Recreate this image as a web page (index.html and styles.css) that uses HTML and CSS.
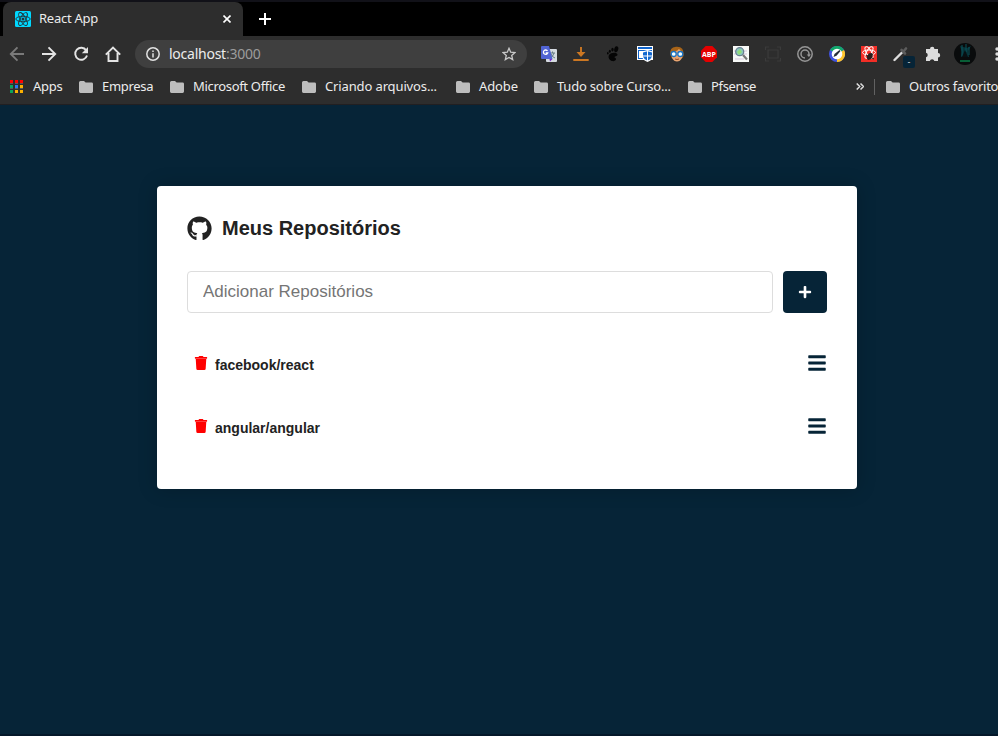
FILE: index.html
```
<!DOCTYPE html>
<html lang="pt-BR">
<head>
<meta charset="utf-8">
<title>React App</title>
<link rel="stylesheet" href="styles.css">
</head>
<body>
<svg class="defs" width="0" height="0">
  <symbol id="folder" viewBox="0 0 14 12"><path d="M1.500 0H5l1.600 1.500h6A1.400 1.400 0 0 1 14 3v7.600a1.400 1.400 0 0 1-1.400 1.400H1.400A1.400 1.400 0 0 1 0 10.600V1.500A1.500 1.500 0 0 1 1.500 0z"/></symbol>
  <symbol id="bars" viewBox="0 0 448 512"><path d="M16 132h416c8.837 0 16-7.163 16-16V76c0-8.837-7.163-16-16-16H16C7.163 60 0 67.163 0 76v40c0 8.837 7.163 16 16 16zm0 160h416c8.837 0 16-7.163 16-16v-40c0-8.837-7.163-16-16-16H16c-8.837 0-16 7.163-16 16v40c0 8.837 7.163 16 16 16zm0 160h416c8.837 0 16-7.163 16-16v-40c0-8.837-7.163-16-16-16H16c-8.837 0-16 7.163-16 16v40c0 8.837 7.163 16 16 16z"/></symbol>
  <symbol id="trash" viewBox="0 0 448 512"><path d="M432 32H312l-9.400-18.700A24 24 0 0 0 281.100 0H166.800a23.720 23.720 0 0 0-21.400 13.300L136 32H16A16 16 0 0 0 0 48v32a16 16 0 0 0 16 16h416a16 16 0 0 0 16-16V48a16 16 0 0 0-16-16zM32 112l21.200 355a48 48 0 0 0 47.900 45h245.800a48 48 0 0 0 47.900-45L416 112z"/></symbol>
</svg>
<header class="browser">
  <div class="tabstrip">
    <div class="tab">
      <svg class="favicon" viewBox="0 0 16 16"><rect width="16" height="16" rx="1.500" fill="#00d8ff"/><g fill="none" stroke="#20343c" stroke-width=".9"><ellipse cx="8" cy="8" rx="7.200" ry="2.700"/><ellipse cx="8" cy="8" rx="7.200" ry="2.700" transform="rotate(60 8 8)"/><ellipse cx="8" cy="8" rx="7.200" ry="2.700" transform="rotate(120 8 8)"/></g><circle cx="8" cy="8" r="1.500" fill="#20343c"/></svg>
      <span class="tab-title">React App</span>
      <svg class="close" viewBox="0 0 8 8"><path d="M.5.5l7 7M7.500.5l-7 7"/></svg>
    </div>
    <svg class="newtab" viewBox="0 0 12 12"><path d="M6 0v12M0 6h12"/></svg>
  </div>
  <div class="toolbar">
    <nav class="nav">
      <svg class="dim" viewBox="0 0 16 16"><path d="M15 8H2M8.500 1.300L1.800 8l6.700 6.700"/></svg>
      <svg viewBox="0 0 16 16"><path d="M1 8h13M7.500 1.300L14.200 8l-6.700 6.700"/></svg>
      <svg viewBox="0 0 16 16"><path d="M13.200 4.400A6 6 0 1 0 14 9.500"/><path class="solid" d="M15 1v6.200H8.800z"/></svg>
      <svg viewBox="0 0 16 16"><path d="M.8 8.700L8 1.500l7.200 7.200M3.500 7v8h9V7"/></svg>
    </nav>
    <div class="address">
      <svg class="info" viewBox="0 0 14 14"><circle cx="7" cy="7" r="6.200"/><path d="M7 6.200v4.300M7 3.400v1.500"/></svg>
      <span class="url">localhost<span class="port">:3000</span></span>
      <svg class="star" viewBox="0 0 14 14"><path d="M7 1.300l1.700 3.900 4.200.4-3.200 2.800 1 4.200L7 10.400l-3.700 2.200 1-4.200L1.100 5.600l4.200-.4z"/></svg>
    </div>
    <div class="extensions">
      <svg viewBox="0 0 16 16"><rect x="5" y="3" width="11" height="13" rx="1" fill="#d5dae0"/><path d="M9 7h5M11.500 5.500V7M13 7q-1 4-4 5M10 8q1 3 4 4" stroke="#637b83" fill="none"/><path d="M1 0h7l3.500 13H1q-1 0-1-1V1q0-1 1-1z" fill="#5164d4"/><path d="M8.500 13h3L9 15.500z" fill="#7523ce"/><path d="M6.500 5A2.200 2.200 0 1 0 6.700 7H4.700" fill="none" stroke="#fff" stroke-width="1.300"/></svg>
      <svg viewBox="0 0 16 16"><path d="M8 1v8M.3 14h15.400" fill="none" stroke="#cc7722" stroke-width="1.900"/><path d="M3.500 6h9L8 11z" fill="#cc7722"/></svg>
      <svg viewBox="0 0 16 16" fill="#050505"><ellipse cx="11.300" cy="3.200" rx="2" ry="3" transform="rotate(15 11 3)"/><ellipse cx="7.500" cy="3.600" rx="1.200" ry="1.900"/><ellipse cx="4.800" cy="5.200" rx="1" ry="1.500"/><ellipse cx="2.800" cy="7.200" rx=".8" ry="1.200"/><path d="M4 9c2-3 8-3 8.500-.5.3 1.600-2.500 1.500-3 2.500-.4 1 1.500.5 1.500 2 0 1.700-2.200 2.500-4 2-2.500-.7-4.300-3.500-3-6z"/></svg>
      <svg viewBox="0 0 16 16"><path d="M0 0h16v14H0z" fill="#fff"/><path d="M1 1h14v2H1zM1 4h14v9H1z" fill="#1064cc"/><path d="M2 5h5v7H2z" fill="#fff"/><path d="M10.500 4l5.500 1.500v5q-1 4-5.500 5.500Q6 14.500 5 10.500v-5z" fill="#fff"/><path d="M10.500 5.200L15 6.500v4q-1 3-4.500 4.300Q7 13.500 6 10.500v-4z" fill="#1167cf"/><path d="M10.500 5v10M6 10h9" stroke="#fff"/></svg>
      <svg viewBox="0 0 16 16"><path d="M1.500 9Q0 1 7 .7q8-.7 7.700 8.300l-1 3h-11z" fill="#a86418"/><path d="M3 5q5 1 7-2l3 3v6q-2 3.500-5 3.500T3 12z" fill="#eba671"/><g fill="#f4ffff" stroke="#1771c4" stroke-width="1.300"><circle cx="4.700" cy="8" r="2.500"/><circle cx="11.300" cy="8" r="2.500"/></g><path d="M6 13q2 1 4 0" stroke="#964622" fill="none"/></svg>
      <svg viewBox="0 0 16 16"><path d="M4.700 0h6.600L16 4.700v6.600L11.300 16H4.700L0 11.300V4.700z" fill="#e40000"/><text class="abp" x="8" y="10.600" text-anchor="middle">ABP</text></svg>
      <svg viewBox="0 0 16 16"><path d="M0 0h16v16H0z" fill="#f8faf8"/><path d="M1 5h13M1 8h13M2 13h9" stroke="#d7c5dd"/><circle cx="6.700" cy="5.700" r="4" fill="#8bc7bd" stroke="#697f91" stroke-width="1.300"/><path d="M4 6l3-3 2 3-3 3z" fill="#91dc79"/><path d="M10 9l4 4.500" stroke="#777" stroke-width="2.200"/></svg>
      <svg viewBox="0 0 16 16"><path d="M.5 4V1H4M12 1h3.500v3M15.500 12v3H12M4 15H.5v-3M3 4h10v8H3z" fill="none" stroke="#3b3b3b" stroke-width="1.200"/></svg>
      <svg viewBox="0 0 16 16" fill="none" stroke="#969696" stroke-width="1.500"><circle cx="8" cy="8" r="7.200"/><path d="M8 12A4 4 0 1 1 12 8v1"/><path d="M9.800 8.500H14l-2.100 2.600z" fill="#969696" stroke="none"/></svg>
      <svg viewBox="0 0 16 16"><circle cx="8" cy="8" r="8" fill="#4053de"/><path d="M1 4a8 8 0 0 1 14 0L8 8z" fill="#13a96b"/><path d="M15 4a8 8 0 0 1-7 12V8z" fill="#ffc52b"/><circle cx="8" cy="8" r="5.300" fill="#fff"/><path d="M4.500 11l1-3 5-4 1 1-4 4.800z" fill="#252d38"/></svg>
      <svg viewBox="0 0 16 16"><path d="M0 0h16v16H0z" fill="#f22e26"/><g fill="none" stroke="#fff"><ellipse cx="8" cy="6.500" rx="6.500" ry="2.500"/><ellipse cx="8" cy="6.500" rx="6.500" ry="2.500" transform="rotate(60 8 6.500)"/><ellipse cx="8" cy="6.500" rx="6.500" ry="2.500" transform="rotate(120 8 6.500)"/></g><ellipse cx="9" cy="10.500" rx="2.500" ry="3.500" fill="#271c1b" transform="rotate(30 9 10)"/><path d="M5 9l8 4M6 12l6-4M7 14l4-7" stroke="#271c1b"/></svg>
      <div class="picker"><svg viewBox="0 0 16 16"><path d="M1.500 14L9 6.500" stroke="#ddd" stroke-width="2.400" stroke-linecap="round"/><path d="M8.500 4l3.500 3.500M10.500 5.500L13 2.500" stroke="#5c5c5c" stroke-width="2.600" stroke-linecap="round"/></svg><span class="badge">-</span></div>
      <svg viewBox="0 0 16 16" fill="#ddd"><path d="M1 3h4a2.200 2.200 0 0 1 4.400 0H13v4a2.200 2.200 0 0 1 0 4.400V15H9.400a2.400 2.400 0 0 0-4.600 0H1v-3.700a2.400 2.400 0 0 0 0-4.600z"/></svg>
      <svg class="avatar" viewBox="0 0 22 22"><circle cx="11" cy="11" r="11" fill="#090b0c"/><path d="M6 3l2 6-1 5h8l-1-6 3-5-4 2z" fill="#07343a"/><path d="M8 2v11M12 1v8M15 4v8" stroke="#0b525b"/><path d="M11 7l3 7H8z" fill="#081013"/><path d="M6 18h10" stroke="#087b45" stroke-width="1.500"/></svg>
      <svg viewBox="0 0 16 16" fill="#ddd"><circle cx="8" cy="3" r="1.700"/><circle cx="8" cy="8" r="1.700"/><circle cx="8" cy="13" r="1.700"/></svg>
    </div>
  </div>
  <div class="bookmarks">
    <svg class="apps" viewBox="0 0 13 13"><path d="M0 0h3v3H0zM5 0h3v3H5zM10 0h3v3h-3z" fill="#f00"/><path d="M0 5h3v3H0zM0 10h3v3H0z" fill="#0aa55b"/><path d="M5 5h3v3H5z" fill="#2878f5"/><path d="M10 5h3v3h-3zM5 10h3v3H5zM10 10h3v3h-3z" fill="#fbb000"/><path d="M0 3.500h13M0 8.500h13" stroke="#777" stroke-width=".6" stroke-dasharray="3 2"/></svg>
    <span class="label apps-label">Apps</span>
    <svg class="folder"><use href="#folder"/></svg><span class="label empresa">Empresa</span>
    <svg class="folder"><use href="#folder"/></svg><span class="label office">Microsoft Office</span>
    <svg class="folder"><use href="#folder"/></svg><span class="label criando">Criando arquivos...</span>
    <svg class="folder"><use href="#folder"/></svg><span class="label adobe">Adobe</span>
    <svg class="folder"><use href="#folder"/></svg><span class="label curso">Tudo sobre Curso...</span>
    <svg class="folder"><use href="#folder"/></svg><span class="label pfsense">Pfsense</span>
    <svg class="more" viewBox="0 0 8 7"><path d="M.7.5l3 3-3 3M4.500.5l3 3-3 3"/></svg>
    <span class="divider"></span>
    <svg class="folder"><use href="#folder"/></svg><span class="label outros">Outros favorito</span>
  </div>
</header>
<main class="card">
  <h1><svg class="github" viewBox="0 0 496 512"><path d="M165.900 397.400c0 2-2.300 3.600-5.200 3.600-3.300.3-5.600-1.300-5.600-3.600 0-2 2.300-3.600 5.200-3.600 3-.3 5.600 1.300 5.600 3.600zm-31.100-4.500c-.7 2 1.300 4.300 4.300 4.900 2.600 1 5.600 0 6.200-2s-1.300-4.300-4.300-5.200c-2.600-.7-5.500.3-6.200 2.300zm44.200-1.700c-2.900.7-4.900 2.600-4.600 4.900.3 2 2.900 3.300 5.900 2.600 2.900-.7 4.900-2.600 4.600-4.600-.3-1.900-3-3.200-5.900-2.900zM244.800 8C106.100 8 0 113.300 0 252c0 110.900 69.800 205.800 169.500 239.200 12.800 2.300 17.300-5.600 17.300-12.100 0-6.200-.3-40.400-.3-61.400 0 0-70 15-84.700-29.800 0 0-11.400-29.100-27.800-36.600 0 0-22.900-15.700 1.600-15.400 0 0 24.900 2 38.600 25.800 21.900 38.600 58.600 27.500 72.900 20.900 2.300-16 8.800-27.100 16-33.700-55.900-6.200-112.300-14.300-112.300-110.500 0-27.500 7.600-41.300 23.600-58.900-2.600-6.500-11.100-33.300 2.600-67.900 20.900-6.500 69 27 69 27 20-5.600 41.500-8.500 62.800-8.500s42.800 2.900 62.800 8.500c0 0 48.100-33.600 69-27 13.700 34.700 5.200 61.400 2.600 67.900 16 17.700 25.800 31.500 25.800 58.900 0 96.500-58.900 104.200-114.800 110.500 9.200 7.900 17 22.900 17 46.400 0 33.700-.3 75.400-.3 83.600 0 6.500 4.600 14.400 17.300 12.100C428.200 457.800 496 362.900 496 252 496 113.300 383.500 8 244.800 8z"/></svg>Meus Repositórios</h1>
  <form class="form">
    <input type="text" placeholder="Adicionar Repositórios">
    <button type="button" aria-label="Adicionar"><svg viewBox="0 0 448 512"><path d="M416 208H272V64c0-17.670-14.330-32-32-32h-32c-17.670 0-32 14.330-32 32v144H32c-17.670 0-32 14.330-32 32v32c0 17.670 14.330 32 32 32h144v144c0 17.670 14.330 32 32 32h32c17.670 0 32-14.330 32-32V304h144c17.670 0 32-14.330 32-32v-32c0-17.670-14.330-32-32-32z"/></svg></button>
  </form>
  <ul class="repos">
    <li><span class="repo"><svg class="trash"><use href="#trash"/></svg><span>facebook/react</span></span><svg class="bars"><use href="#bars"/></svg></li>
    <li><span class="repo"><svg class="trash"><use href="#trash"/></svg><span>angular/angular</span></span><svg class="bars"><use href="#bars"/></svg></li>
  </ul>
</main>
</body>
</html>
```
FILE: styles.css
```
* { box-sizing: border-box; margin: 0; padding: 0; }
html, body { height: 100%; overflow: hidden; }
body { background: #062437; color: #222; font: 14px "Liberation Sans", Arial, sans-serif; border-bottom: 2px solid #04182a; }
svg { display: block; flex: none; }
.defs { position: absolute; }

.browser { height: 105px; background: #2d2d2d; border-bottom: 1px solid #211f21; color: #ececec; font-family: "Noto Sans", sans-serif; font-size: 13px; overflow: hidden; }
.tabstrip { height: 36px; display: flex; align-items: flex-end; background: #000; border-top: 2px solid #111118; padding-left: 3px; }
.tab { width: 240px; height: 34px; display: flex; align-items: center; padding: 0 12px; background: #2d2d2d; border-radius: 8px 8px 0 0; }
.favicon { width: 16px; height: 16px; margin-right: 8px; }
.tab-title { flex: 1; padding-bottom: 2px; white-space: nowrap; letter-spacing: -.25px; }
.close { width: 8px; height: 8px; fill: none; stroke: #fff; stroke-width: 1.6; }
.newtab { width: 12px; height: 12px; margin: 0 0 11px 16px; stroke: #fff; stroke-width: 2; }

.toolbar { height: 36px; display: flex; align-items: center; padding-left: 9px; }
.nav { display: flex; flex: none; gap: 16px; margin-right: 14px; }
.nav svg { width: 16px; height: 16px; fill: none; stroke: #e4e4e4; stroke-width: 1.9; }
.nav .dim { stroke: #7a7a7a; }
.nav .solid { fill: #e4e4e4; stroke: none; }
.address { flex: none; width: 392px; height: 28px; display: flex; align-items: center; padding: 0 11px; background: #3f3f3f; border-radius: 14px; font-size: 14px; }
.info { width: 14px; height: 14px; margin-right: 9px; fill: none; stroke: #e2e2e2; stroke-width: 1.5; }
.url { flex: 1; padding-bottom: 1px; letter-spacing: -.25px; }
.port { color: #9c9c9c; }
.star { width: 14px; height: 14px; fill: none; stroke: #c9c9c9; stroke-width: 1.3; }
.extensions { display: flex; flex: none; align-items: center; gap: 16px; margin-left: 14px; }
.extensions > svg { width: 16px; height: 16px; }
.extensions > .avatar { width: 22px; height: 22px; margin: 0 -3px; }
.abp { font: bold 7px "Open Sans", sans-serif; fill: #fff; }
.picker { position: relative; width: 16px; height: 16px; }
.badge { position: absolute; left: 10px; top: 10px; width: 12px; height: 12px; border-radius: 2px; background: #062437; color: #ddd; font-size: 9px; line-height: 11px; text-align: center; }

.bookmarks { height: 32px; display: flex; align-items: center; padding: 0 0 3px 10px; white-space: nowrap; }
.apps { width: 13px; height: 13px; margin-right: 10px; }
.folder { width: 14px; height: 12px; margin-right: 9px; fill: #bdbdbd; }
.label { flex: none; padding-bottom: 2px; }
.apps-label { width: 46px; letter-spacing: -.25px; }
.empresa { width: 68px; letter-spacing: -.3px; }
.office { width: 109px; letter-spacing: -.32px; }
.criando { width: 131px; letter-spacing: -.13px; }
.adobe { width: 55px; letter-spacing: -.1px; }
.curso { width: 131px; letter-spacing: -.22px; }
.pfsense { width: 145px; letter-spacing: -.35px; }
.outros { letter-spacing: -.25px; }
.more { width: 8px; height: 7px; fill: none; stroke: #ddd; stroke-width: 1.5; }
.divider { flex: none; width: 1px; height: 16px; margin: 0 11px 0 10px; background: #626262; }

.card { width: 700px; height: 303px; margin: 81px 0 0 157px; padding: 30px; background: #fff; border-radius: 4px; box-shadow: 0 0 20px rgba(0, 0, 0, .2); }
h1 { height: 25px; display: flex; align-items: center; font-size: 20px; }
.github { width: 25px; height: 25px; margin-right: 10px; fill: #222; }
.form { display: flex; margin-top: 30px; }
input { flex: 1; height: 42px; padding: 0 15px; border: 1px solid #ddd; border-radius: 4px; font: 17px "Liberation Sans", sans-serif; background: #fff; }
input::placeholder { color: #757575; }
button { width: 44px; height: 42px; margin-left: 10px; display: flex; align-items: center; justify-content: center; border: 0; border-radius: 4px; background: #062437; }
button svg { width: 14px; height: 14px; fill: #fff; }
.repos { margin-top: 20px; list-style: none; }
.repos li { height: 63px; display: flex; align-items: center; justify-content: space-between; padding-bottom: 4px; }
.repo { display: flex; align-items: center; font-weight: bold; }
.repo span { padding-top: 5px; }
.trash { width: 14px; height: 14px; margin: 0 7px; fill: #f00; }
.bars { width: 20px; height: 20px; fill: #062437; }
```
